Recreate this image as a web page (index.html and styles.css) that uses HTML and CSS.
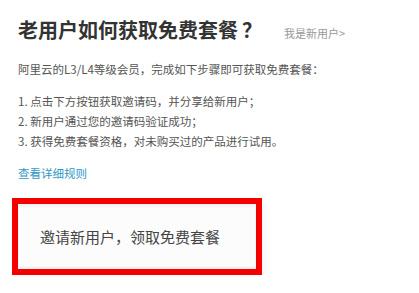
FILE: index.html
```html
<!DOCTYPE html>
<html lang="zh-CN">
<head>
<meta charset="utf-8">
<title>老用户如何获取免费套餐</title>
<link rel="stylesheet" href="styles.css">
</head>
<body>
<div class="page">
  <div class="header">
    <h1 class="title">老用户如何获取免费套餐<span class="qmark">？</span></h1>
    <a class="new-user" href="#">我是新用户&gt;</a>
  </div>
  <p class="intro">阿里云的L3/L4等级会员，完成如下步骤即可获取免费套餐：</p>
  <ol class="steps">
    <li>1. 点击下方按钮获取邀请码，并分享给新用户；</li>
    <li>2. 新用户通过您的邀请码验证成功；</li>
    <li>3. 获得免费套餐资格，对未购买过的产品进行试用。</li>
  </ol>
  <a class="rules" href="#">查看详细规则</a>
  <div class="highlight">
    <div class="invite-btn">邀请新用户，领取免费套餐</div>
  </div>
</div>
</body>
</html>
```

FILE: styles.css
```css
html, body {
  margin: 0;
  padding: 0;
  background: #fff;
}
body {
  font-family: "Noto Sans CJK SC", "Noto Sans", sans-serif;
  color: #555;
}
.page {
  padding: 16px 18px 0 18px;
}
.header {
  display: flex;
  align-items: center;
  height: 28px;
}
.title {
  margin: 0;
  font-size: 20px;
  line-height: 28px;
  font-weight: bold;
  color: #333;
}
.qmark {
  margin-left: 4px;
}
.new-user {
  margin-left: 22px;
  margin-top: 5px;
  font-size: 11px;
  line-height: 14px;
  color: #999;
  text-decoration: none;
}
.intro {
  margin: 15px 0 0 0;
  font-size: 11.5px;
  line-height: 20px;
  color: #555;
}
.steps {
  list-style: none;
  margin: 12px 0 0 0;
  padding: 0;
  font-size: 11.5px;
  line-height: 20px;
  color: #555;
}
.rules {
  display: block;
  margin-top: 12px;
  font-size: 11.5px;
  line-height: 20px;
  color: #2e97c6;
  text-decoration: none;
}
.highlight {
  margin: 15px 0 0 -6px;
  width: 238px;
  height: 65px;
  border: 6px solid #f40000;
  box-shadow: 3px 3px 8px rgba(0, 0, 0, 0.05);
}
.invite-btn {
  box-sizing: border-box;
  height: 100%;
  display: flex;
  align-items: center;
  padding-left: 22px;
  background: #fcfcfc;
  box-shadow: inset 0 3px 3px -1px #eeeeee, inset 0 -3px 3px -1px #eeeeee;
  font-size: 15px;
  color: #444;
}
```
